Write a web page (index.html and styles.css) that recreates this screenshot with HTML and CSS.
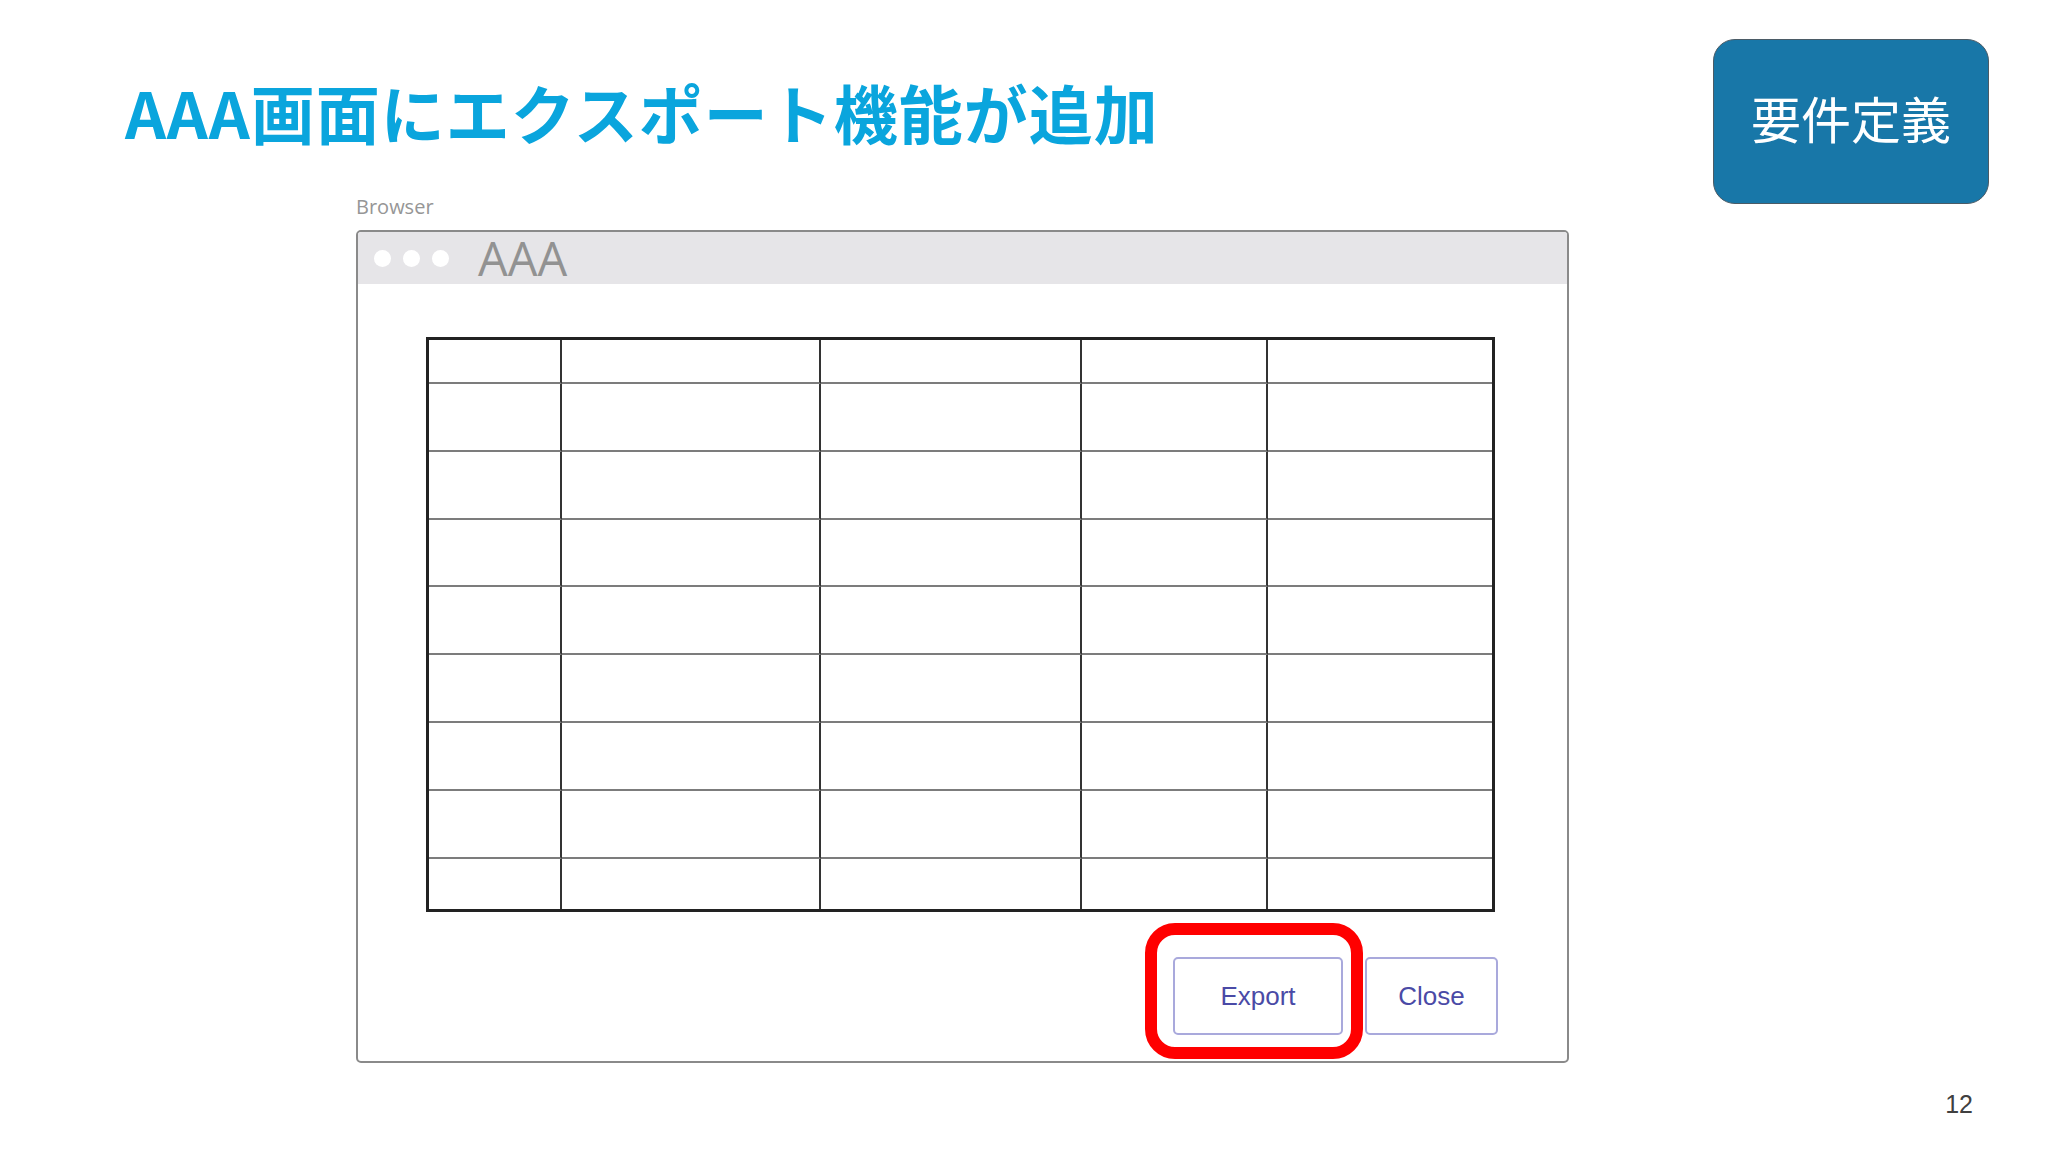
FILE: index.html
```html
<!DOCTYPE html>
<html lang="ja">
<head>
<meta charset="utf-8">
<title>AAA画面にエクスポート機能が追加</title>
<link rel="stylesheet" href="styles.css">
</head>
<body>
<div class="slide">
  <main class="main">
    <h1 class="title">AAA画面にエクスポート機能が追加</h1>
    <div class="mock">
      <div class="mock-label">Browser</div>
      <div class="window">
        <div class="window-bar">
          <span class="dot"></span><span class="dot"></span><span class="dot"></span>
          <span class="window-title">AAA</span>
        </div>
        <div class="window-body">
          <div class="grid">
            <div class="c"></div><div class="c"></div><div class="c"></div><div class="c"></div><div class="c"></div>
            <div class="c"></div><div class="c"></div><div class="c"></div><div class="c"></div><div class="c"></div>
            <div class="c"></div><div class="c"></div><div class="c"></div><div class="c"></div><div class="c"></div>
            <div class="c"></div><div class="c"></div><div class="c"></div><div class="c"></div><div class="c"></div>
            <div class="c"></div><div class="c"></div><div class="c"></div><div class="c"></div><div class="c"></div>
            <div class="c"></div><div class="c"></div><div class="c"></div><div class="c"></div><div class="c"></div>
            <div class="c"></div><div class="c"></div><div class="c"></div><div class="c"></div><div class="c"></div>
            <div class="c"></div><div class="c"></div><div class="c"></div><div class="c"></div><div class="c"></div>
            <div class="c last"></div><div class="c last"></div><div class="c last"></div><div class="c last"></div><div class="c last"></div>
          </div>
          <div class="actions">
            <div class="highlight-wrap">
              <button class="btn btn-export">Export</button>
              <span class="highlight"></span>
            </div>
            <button class="btn btn-close">Close</button>
          </div>
        </div>
      </div>
    </div>
  </main>
  <aside class="side">
    <div class="badge">要件定義</div>
    <div class="page-num">12</div>
  </aside>
</div>
</body>
</html>
```

FILE: styles.css
```css
html, body {
  margin: 0;
  padding: 0;
  background: #ffffff;
}

.slide {
  width: 2048px;
  height: 1152px;
  display: flex;
  background: #ffffff;
  overflow: hidden;
}

.main {
  flex: 1;
  padding: 79px 0 0 125px;
  box-sizing: border-box;
}

.title {
  margin: 0;
  font-family: "Noto Sans CJK JP", "Noto Sans", sans-serif;
  font-weight: 700;
  font-size: 64px;
  line-height: 64px;
  color: #0aa5dd;
  letter-spacing: 1px;
  white-space: nowrap;
}

.mock {
  margin: 50px 0 0 231px;
}

.mock-label {
  font-family: "Open Sans", "Noto Sans", sans-serif;
  font-weight: 400;
  font-size: 20px;
  line-height: 27px;
  color: #969696;
}

.window {
  margin-top: 10px;
  width: 1213px;
  box-sizing: border-box;
  border: 2px solid #8a8a8a;
  border-radius: 5px;
  background: #ffffff;
}

.window-bar {
  height: 52px;
  background: #e6e5e8;
  border-radius: 3px 3px 0 0;
  display: flex;
  align-items: center;
  padding-left: 16px;
}

.dot {
  width: 17px;
  height: 17px;
  border-radius: 50%;
  background: #ffffff;
  margin-right: 12px;
}

.window-title {
  margin-left: 17px;
  font-family: "Open Sans", "Noto Sans", sans-serif;
  font-weight: 400;
  font-size: 47px;
  line-height: 1;
  color: #929292;
}

.window-body {
  padding: 53px 72px 26px 68px;
}

.grid {
  width: 1069px;
  height: 575px;
  box-sizing: border-box;
  border: 3px solid #222222;
  display: grid;
  grid-template-columns: 133px 259px 261px 186px 1fr;
  grid-template-rows: 44px 68px 68px 67px 68px 68px 68px 68px 1fr;
}

.c {
  border-right: 2px solid #333333;
  border-bottom: 2px solid #7c7c7c;
}

.c:nth-child(5n) {
  border-right: none;
}

.c.last {
  border-bottom: none;
}

.actions {
  margin: 45px -3px 0 0;
  display: flex;
  justify-content: flex-end;
  gap: 22px;
}

.highlight-wrap {
  position: relative;
}

.btn {
  height: 78px;
  box-sizing: border-box;
  border: 2px solid #a9a9dc;
  border-radius: 5px;
  background: #ffffff;
  font-family: "Liberation Sans", Arial, sans-serif;
  font-size: 26px;
  color: #4a4aa6;
  padding: 0;
  display: block;
}

.btn-export {
  width: 170px;
}

.btn-close {
  width: 133px;
}

.highlight {
  position: absolute;
  left: -28px;
  top: -34px;
  width: 218px;
  height: 136px;
  box-sizing: border-box;
  border: 12px solid #ff0000;
  border-radius: 30px;
  pointer-events: none;
}

.side {
  width: 335px;
  display: flex;
  flex-direction: column;
  align-items: flex-end;
  padding: 39px 59px 0 0;
  box-sizing: border-box;
}

.badge {
  width: 276px;
  height: 165px;
  box-sizing: border-box;
  background: #1877a8;
  border: 1px solid #4b5b66;
  border-radius: 22px;
  display: flex;
  align-items: center;
  justify-content: center;
  color: #ffffff;
  font-family: "Noto Sans CJK JP", "Noto Sans", sans-serif;
  font-size: 50px;
  line-height: 1;
  padding-bottom: 10px;
}

.page-num {
  margin-top: auto;
  padding: 0 16px 35px 0;
  font-family: "Liberation Sans", Arial, sans-serif;
  font-size: 25px;
  line-height: 25px;
  color: #404040;
}
```
